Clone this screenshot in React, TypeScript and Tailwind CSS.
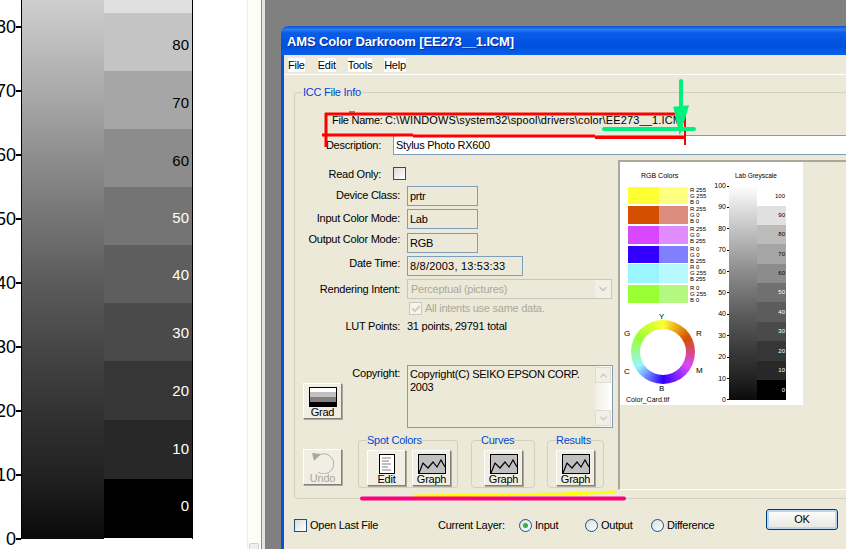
import { ChevronDown, ChevronUp, Check } from "lucide-react";

const AXIS = ["80", "70", "60", "50", "40", "30", "20", "10", "0"];

const BANDS = [
  { color: "bg-[#e0e0e0]", h: "h-[13px]", label: "", text: "", pad: "" },
  { color: "bg-[#c4c4c4]", h: "h-[58px]", label: "80", text: "text-black", pad: "pt-[6px]" },
  { color: "bg-[#a6a6a6]", h: "h-[58px]", label: "70", text: "text-black", pad: "pt-[6px]" },
  { color: "bg-[#8c8c8c]", h: "h-[58px]", label: "60", text: "text-black", pad: "pt-[6px]" },
  { color: "bg-[#747474]", h: "h-[58px]", label: "50", text: "text-white", pad: "pt-[4px]" },
  { color: "bg-[#5e5e5e]", h: "h-[58px]", label: "40", text: "text-white", pad: "pt-[2px]" },
  { color: "bg-[#4a4a4a]", h: "h-[58px]", label: "30", text: "text-white", pad: "pt-[2px]" },
  { color: "bg-[#363636]", h: "h-[59px]", label: "20", text: "text-white", pad: "pt-px" },
  { color: "bg-[#282828]", h: "h-[59px]", label: "10", text: "text-white", pad: "" },
  { color: "bg-black", h: "h-[59px]", label: "0", text: "text-white", pad: "pb-[4px]" },
];

const SWATCHES = [
  { a: "bg-[#ffff33]", b: "bg-[#ffff80]", h: "h-[17px]", mb: "mb-[2px]", t: ["R 255", "G 255", "B 0"] },
  { a: "bg-[#d45000]", b: "bg-[#dc8c7c]", h: "h-[18px]", mb: "mb-[2px]", t: ["R 255", "G 0", "B 0"] },
  { a: "bg-[#d846ff]", b: "bg-[#e08cff]", h: "h-[18px]", mb: "mb-[2px]", t: ["R 255", "G 0", "B 255"] },
  { a: "bg-[#3300ff]", b: "bg-[#8080ff]", h: "h-[17px]", mb: "mb-[1px]", t: ["R 0", "G 0", "B 255"] },
  { a: "bg-[#99f5ff]", b: "bg-[#b8f8ff]", h: "h-[19px]", mb: "mb-[2px]", t: ["R 0", "G 255", "B 255"] },
  { a: "bg-[#99ff33]", b: "bg-[#b3f880]", h: "h-[18px]", mb: "", t: ["R 0", "G 255", "B 0"] },
];

const MINI_AXIS = ["100", "90", "80", "70", "60", "50", "40", "30", "20", "10", "0"];

const MINI_BANDS = [
  { color: "bg-white", h: "h-[20px]", label: "100", text: "text-black" },
  { color: "bg-[#e0e0e0]", h: "h-[19px]", label: "90", text: "text-black" },
  { color: "bg-[#bcbcbc]", h: "h-[19px]", label: "80", text: "text-black" },
  { color: "bg-[#a5a5a5]", h: "h-[20px]", label: "70", text: "text-black" },
  { color: "bg-[#8c8c8c]", h: "h-[19px]", label: "60", text: "text-black" },
  { color: "bg-[#707070]", h: "h-[19px]", label: "50", text: "text-white" },
  { color: "bg-[#5c5c5c]", h: "h-[20px]", label: "40", text: "text-white" },
  { color: "bg-[#4a4a4a]", h: "h-[19px]", label: "30", text: "text-white" },
  { color: "bg-[#363636]", h: "h-[20px]", label: "20", text: "text-white" },
  { color: "bg-[#282828]", h: "h-[19px]", label: "10", text: "text-white" },
  { color: "bg-black", h: "h-[20px]", label: "0", text: "text-white" },
];

function GraphIcon() {
  return (
    <svg width="28" height="20" viewBox="0 0 28 20" className="block">
      <rect x="0.5" y="0.5" width="27" height="19" fill="#c0c0c0" stroke="#000" />
      <polyline points="1,19 5,9 10,14 15,8 19,13 23,6 27,13" fill="none" stroke="#000" strokeWidth="1.2" />
    </svg>
  );
}

function GradIcon() {
  return (
    <div className="flex h-[20px] w-[28px] flex-col border border-black">
      <div className="h-[4px] bg-white" />
      <div className="h-[5px] bg-[#c0c0c0]" />
      <div className="h-[5px] bg-[#808080]" />
      <div className="flex-1 bg-black" />
    </div>
  );
}

function DocIcon() {
  return (
    <svg width="16" height="20" viewBox="0 0 16 20" className="block">
      <rect x="0.5" y="0.5" width="15" height="19" fill="#fff" stroke="#000" />
      <path d="M3 4h9M3 7h7M3 10h9M3 13h6M3 16h9" stroke="#808080" />
    </svg>
  );
}

function UndoIcon() {
  return (
    <svg width="24" height="22" viewBox="0 0 24 22" className="block">
      <path d="M8 3a10 10 0 1 1 -1 17" fill="none" stroke="#b5b3a6" strokeWidth="1" />
      <path d="M1 1l9 1-7 7z" fill="#aca899" />
    </svg>
  );
}

function ToolButton({ label, disabled, children }: { label: string; disabled?: boolean; children: React.ReactNode }) {
  return (
    <div className="flex h-[36px] w-[39px] flex-col items-center border border-t-white border-l-white border-r-[#808080] border-b-[#808080] bg-[#f1efe4] pt-[3px] shadow-[1px_1px_0_#aca899]">
      <div className="flex h-[20px] items-center">{children}</div>
      <span className={`leading-[11px] ${disabled ? "text-[#aca899]" : "text-black"}`}>{label}</span>
    </div>
  );
}

function Label({ children, className }: { children: React.ReactNode; className?: string }) {
  return <div className={`w-[104px] shrink-0 text-right leading-[14px] whitespace-nowrap ${className ?? ""}`}>{children}</div>;
}

function ReadField({ children, width }: { children: React.ReactNode; width: string }) {
  return <div className={`ml-[7px] flex h-[20px] items-center border border-[#7f9db9] pl-[2px] ${width}`}>{children}</div>;
}

function Radio({ on }: { on?: boolean }) {
  return (
    <div className="flex h-[13px] w-[13px] items-center justify-center rounded-full border border-[#1c5180] bg-gradient-to-br from-[#dcdcd7] to-white">
      {on && <div className="h-[5px] w-[5px] rounded-full bg-[#3ab03a]" />}
    </div>
  );
}

function Group({ title, className, legend, children }: { title: string; className: string; legend?: string; children: React.ReactNode }) {
  return (
    <fieldset className={`h-[55px] rounded-[4px] border border-[#d0d0bf] ${className}`}>
      <legend className={`leading-[14px] text-[#0046d5] ${legend ?? ""}`}>{title}</legend>
      <div className="flex gap-[6px] pt-[3px]">{children}</div>
    </fieldset>
  );
}

function ColorCard() {
  return (
    <div className="flex h-[243px] w-[183px] bg-white font-['Liberation_Sans',sans-serif] tracking-normal text-black">
      {/* swatches and colour wheel */}
      <div className="w-[109px] shrink-0 pl-[8px]">
        <div className="h-[25px] pt-[10px] pl-[13px] text-[7px] leading-[8px] whitespace-nowrap">RGB Colors</div>
        {SWATCHES.map((s) => (
          <div key={s.a} className={`flex ${s.h} ${s.mb}`}>
            <div className={`w-[31px] ${s.a}`} />
            <div className={`w-[29px] ${s.b}`} />
            <div className="ml-[2px] text-[6px] leading-[6px] whitespace-nowrap">
              {s.t.map((t) => (
                <div key={t}>{t}</div>
              ))}
            </div>
          </div>
        ))}
        <div className="relative mt-[17px] ml-[3px] h-[64px] w-[64px] rounded-full bg-[conic-gradient(#ffff33,#d45000_60deg,#d846ff_120deg,#3300ff_180deg,#99f5ff_240deg,#99ff33_300deg,#ffff33)]">
          <div className="absolute inset-[9px] rounded-full bg-white" />
          <span className="absolute top-[-8px] left-[28px] text-[8px] leading-[9px]">Y</span>
          <span className="absolute top-[9px] left-[-7px] text-[8px] leading-[9px]">G</span>
          <span className="absolute top-[9px] left-[65px] text-[8px] leading-[9px]">R</span>
          <span className="absolute top-[47px] left-[-7px] text-[8px] leading-[9px]">C</span>
          <span className="absolute top-[46px] left-[65px] text-[8px] leading-[9px]">M</span>
          <span className="absolute top-[64px] left-[28px] text-[8px] leading-[9px]">B</span>
        </div>
        <div className="mt-[12px] -ml-[2px] text-[7px] leading-[8px] whitespace-nowrap">Color_Card.tif</div>
      </div>
      {/* greyscale */}
      <div className="flex w-[74px] flex-col">
        <div className="h-[24px] pt-[10px] pl-[6px] text-[6.5px] leading-[8px] whitespace-nowrap">Lab Greyscale</div>
        <div className="flex h-[214px]">
          <div className="-mt-[4px] -ml-[16px] flex h-[222px] w-[16px] flex-col justify-between">
            {MINI_AXIS.map((a) => (
              <div key={a} className="flex h-[8px] items-center justify-end text-[7px] leading-[8px] whitespace-nowrap">
                {a}
                <span className="ml-px h-px w-[2px] shrink-0 bg-black" />
              </div>
            ))}
          </div>
          <div className="w-[28px] bg-[linear-gradient(#ffffff,#e0e0e0_10%,#c4c4c4_20%,#a8a8a8_30%,#8c8c8c_40%,#747474_50%,#5c5c5c_60%,#484848_70%,#343434_80%,#222222_90%,#0a0a0a)]" />
          <div className="w-[29px]">
            {MINI_BANDS.map((b) => (
              <div key={b.label} className={`flex items-center justify-end pr-px text-[6px] ${b.color} ${b.h} ${b.text}`}>
                {b.label}
              </div>
            ))}
          </div>
        </div>
      </div>
    </div>
  );
}

function Dialog() {
  return (
    <div className="w-[640px] rounded-t-[8px] border-x-[3px] border-[#0a50d8] bg-[#ece9d8] font-['Liberation_Sans',sans-serif] text-[11px] tracking-[-0.25px] text-black">
      {/* title bar */}
      <div className="-mx-[3px] flex h-[29px] items-center rounded-t-[8px] bg-[linear-gradient(#0a50c8,#2a7cf2_12%,#0a5ce8_24%,#0050e0_70%,#0a60ea)] pt-[3px] pl-[6px] text-[13px] font-bold tracking-[-0.15px] whitespace-nowrap text-white [text-shadow:1px_1px_0_#0a2a90]">
        AMS Color Darkroom [EE273__1.ICM]
      </div>
      {/* menu */}
      <div className="flex h-[20px] items-center border-b border-white pl-[4px] leading-[14px]">
        <span className="bg-white">File</span>
        <span className="ml-[13px] bg-white">Edit</span>
        <span className="ml-[12px] bg-white">Tools</span>
        <span className="ml-[12px] bg-white">Help</span>
      </div>

      <div className="pt-[10px] pl-[10px]">
        <fieldset className="h-[414px] w-[640px] rounded-[4px] border border-[#d0d0bf] pl-px">
          <legend className="ml-[6px] px-px leading-[14px] text-[#0046d5]">ICC File Info</legend>
          <div className="flex">
            {/* form */}
            <div className="w-[317px] shrink-0">
              <div className="mt-[14px] flex h-[14px] leading-[14px] whitespace-nowrap">
                <div className="ml-[36px] w-[49px]">File Name:</div>
                <div className="ml-[4px] tracking-[0.14px]">C:\WINDOWS\system32\spool\drivers\color\EE273__1.ICM</div>
              </div>
              <div className="mt-[8px] flex h-[20px] items-center">
                <div className="w-[85px] shrink-0 text-right leading-[14px]">Description:</div>
                <div className="ml-[12px] flex h-[20px] w-[500px] shrink-0 items-center border border-[#7f9db9] bg-white pl-[2px]">Stylus Photo RX600</div>
              </div>
              <div className="mt-[12px] flex h-[13px] items-center">
                <div className="w-[85px] shrink-0 text-right leading-[14px]">Read Only:</div>
                <div className="ml-[12px] h-[13px] w-[13px] border border-[#1c5180] bg-gradient-to-br from-[#dcdcd7] to-white" />
              </div>
              <div className="mt-[6px] flex">
                <Label className="pt-[2px]">Device Class:</Label>
                <ReadField width="w-[71px]">prtr</ReadField>
              </div>
              <div className="mt-[3px] flex">
                <Label className="pt-[2px]">Input Color Mode:</Label>
                <ReadField width="w-[71px]">Lab</ReadField>
              </div>
              <div className="mt-[4px] flex">
                <Label className="-mt-px">Output Color Mode:</Label>
                <ReadField width="w-[71px]">RGB</ReadField>
              </div>
              <div className="mt-[3px] flex">
                <Label>Date Time:</Label>
                <ReadField width="w-[116px] tracking-[0.2px]">8/8/2003, 13:53:33</ReadField>
              </div>
              <div className="mt-[3px] flex">
                <Label className="pt-[3px]">Rendering Intent:</Label>
                <div className="ml-[7px] flex h-[20px] w-[205px] items-center justify-between border border-[#c9c7ba] pl-[3px] text-[#aca899]">
                  Perceptual (pictures)
                  <div className="flex h-[18px] w-[16px] items-center justify-center bg-[#f1efe6]">
                    <ChevronDown size={12} strokeWidth={3} className="text-[#c9c7ba]" />
                  </div>
                </div>
              </div>
              <div className="mt-[3px] ml-[113px] flex h-[13px] items-center text-[#aca899]">
                <div className="mr-[3px] flex h-[13px] w-[13px] items-center justify-center border border-[#c9c7ba] bg-[#f4f3ec]">
                  <Check size={10} strokeWidth={4} className="text-[#c9c7ba]" />
                </div>
                All intents use same data.
              </div>
              <div className="mt-[4px] flex h-[14px] leading-[14px]">
                <Label>LUT Points:</Label>
                <div className="ml-[7px]">31 points, 29791 total</div>
              </div>
              {/* copyright */}
              <div className="mt-[32px] flex">
                <div className="w-[104px] shrink-0">
                  <div className="pt-px text-right leading-[14px]">Copyright:</div>
                  <div className="mt-[3px] ml-[7px]">
                    <ToolButton label="Grad">
                      <GradIcon />
                    </ToolButton>
                  </div>
                </div>
                <div className="ml-[7px] flex h-[63px] w-[206px] justify-between border border-[#7f9db9] pl-[2px] leading-[13px]">
                  <div className="pt-[2px] whitespace-nowrap">
                    Copyright(C) SEIKO EPSON CORP.
                    <br />
                    2003
                  </div>
                  <div className="flex w-[17px] shrink-0 flex-col justify-between bg-[linear-gradient(90deg,#f0efe6,#ffffff)] py-px pr-px">
                    <div className="flex h-[16px] items-center justify-center border border-[#dedccf] bg-[#f1efe6]">
                      <ChevronUp size={11} strokeWidth={3} className="text-[#c9c7ba]" />
                    </div>
                    <div className="flex h-[16px] items-center justify-center border border-[#dedccf] bg-[#f1efe6]">
                      <ChevronDown size={11} strokeWidth={3} className="text-[#c9c7ba]" />
                    </div>
                  </div>
                </div>
              </div>
              {/* bottom tool groups */}
              <div className="mt-[5px] flex pl-[7px]">
                <div className="pt-[16px]">
                  <ToolButton label="Undo" disabled>
                    <UndoIcon />
                  </ToolButton>
                </div>
                <Group title="Spot Colors" className="ml-[16px] w-[100px] pl-[8px]">
                  <ToolButton label="Edit">
                    <DocIcon />
                  </ToolButton>
                  <ToolButton label="Graph">
                    <GraphIcon />
                  </ToolButton>
                </Group>
                <Group title="Curves" className="ml-[13px] w-[64px] pl-[12px]" legend="-ml-[3px]">
                  <ToolButton label="Graph">
                    <GraphIcon />
                  </ToolButton>
                </Group>
                <Group title="Results" className="ml-[12px] w-[57px] pl-[8px]">
                  <ToolButton label="Graph">
                    <GraphIcon />
                  </ToolButton>
                </Group>
              </div>
            </div>
            {/* picture frame */}
            <div className="mt-[61px] ml-[5px] h-[330px] w-[300px] border-t-2 border-b border-l-2 border-t-[#aca899] border-b-white border-l-[#aca899]">
              <ColorCard />
            </div>
          </div>
        </fieldset>
        {/* bottom controls */}
        <div className="mt-[10px] flex h-[40px] items-start">
          <div className="mt-[9px] flex items-center leading-[14px]">
            <div className="h-[13px] w-[13px] border border-[#1c5180] bg-gradient-to-br from-[#dcdcd7] to-white" />
            <span className="ml-[3px] w-[128px]">Open Last File</span>
            <span className="w-[81px]">Current Layer:</span>
            <Radio on />
            <span className="ml-[3px] w-[50px]">Input</span>
            <Radio />
            <span className="ml-[3px] w-[50px]">Output</span>
            <Radio />
            <span className="ml-[3px] w-[99px]">Difference</span>
          </div>
          <div className="flex h-[21px] w-[72px] shrink-0 items-center justify-center rounded-[3px] border border-[#003c74] bg-gradient-to-b from-white to-[#e6e5de] shadow-[inset_0_0_0_2px_#bcd4f6]">
            OK
          </div>
        </div>
      </div>
    </div>
  );
}

function Annotations() {
  return (
    <svg width="846" height="549" viewBox="0 0 846 549" className="pointer-events-none absolute top-0 left-0">
      <path d="M349 112h6" stroke="#222" strokeWidth="1" />
      <g stroke="#ff0000" fill="none" strokeWidth="3">
        <path d="M325 114H686" />
        <path d="M322 135H413" />
        <path d="M413 136H595" />
        <path d="M595 137.5H686" />
        <path d="M326 113V147" />
        <path d="M685 113V145" strokeWidth="2" />
      </g>
      <g stroke="#00f080" fill="none" strokeLinecap="round">
        <path d="M681 81V129" strokeWidth="4" />
        <path d="M604 129H694" strokeWidth="4" />
        <path d="M675 108L680 130L687 107Z" fill="#00f080" strokeWidth="3" />
      </g>
      <path d="M413 496L500 495L563 494L615 492" stroke="#ffff00" strokeWidth="3" fill="none" />
      <path d="M362 498.5H624" stroke="#ff0080" strokeWidth="4" strokeLinecap="round" />
    </svg>
  );
}

export default function App() {
  return (
    <div className="relative flex h-[549px] w-[846px] overflow-hidden bg-white font-['Liberation_Sans',sans-serif]">
      {/* chart */}
      <div className="flex h-[539px] w-[247px] shrink-0 items-start">
        <div className="mt-[-5px] flex w-[21px] shrink-0 flex-col">
          {AXIS.map((a) => (
            <div key={a} className="flex h-[64px] items-center justify-end text-[18px] leading-[20px] whitespace-nowrap text-black">
              {a}
              <span className="h-[1.5px] w-[5px] shrink-0 bg-black" />
            </div>
          ))}
        </div>
        <div className="flex h-[539px] w-[172px] shrink-0 border-x border-black">
          <div className="w-[82px] bg-[linear-gradient(#cecece,#c4c4c4_5%,#aaaaaa_17%,#8e8e8e_29%,#757575_40.5%,#5c5c5c_52%,#474747_64%,#333333_76%,#222222_88%,#0a0a0a)]" />
          <div className="flex-1">
            {BANDS.map((b) => (
              <div key={b.h + b.color} className={`flex items-center justify-end pr-[3px] text-[15px] ${b.color} ${b.h} ${b.text} ${b.pad}`}>
                {b.label}
              </div>
            ))}
          </div>
        </div>
      </div>
      {/* neighbouring window edge */}
      <div className="flex h-full w-[14px] shrink-0 flex-col justify-end border-l border-[#efefe4] bg-[#fdfdf8] pl-px">
        <div className="h-[6px] w-[10px] rounded-t-[2px] border border-b-0 border-[#d0d0c8] bg-[#f0f0ea]" />
      </div>
      <div className="w-[4px] shrink-0 border-l border-[#8a8a8a] bg-[#e4e4e4]" />
      {/* desktop */}
      <div className="flex-1 bg-[#808080] pt-[26px] pl-[16px]">
        <Dialog />
      </div>
      <Annotations />
    </div>
  );
}
